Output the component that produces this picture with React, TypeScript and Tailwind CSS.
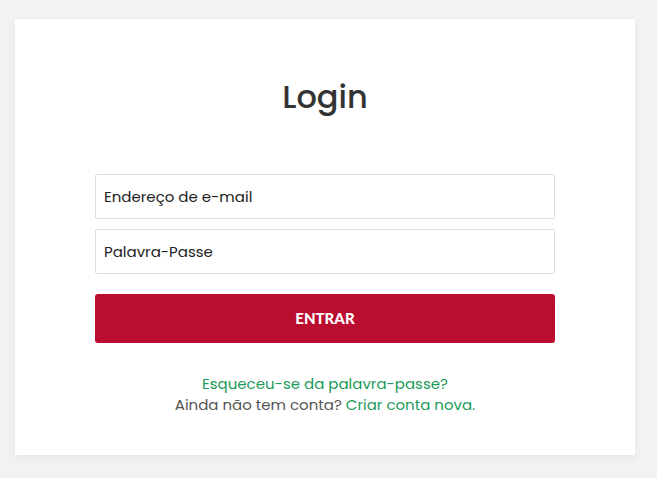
export default function App() {
  return (
    <div className="min-h-[478px] w-full bg-[#f2f2f2] pt-[19px] px-[15px] font-['Poppins','Noto_Sans',sans-serif]">
      <div className="w-[620px] h-[436px] bg-white shadow-[0_2px_10px_rgba(0,0,0,0.06)] px-[80px] pt-[56px]">
        <h1 className="text-center text-[32px] leading-[44px] font-medium text-[#333]">Login</h1>
        <form className="mt-[55px] flex flex-col">
          <input
            type="email"
            placeholder="Endereço de e-mail"
            className="h-[45px] w-full border border-[#ddd] rounded-[2px] px-[8px] text-[15px] placeholder:text-[#222] focus:outline-none"
          />
          <input
            type="password"
            placeholder="Palavra-Passe"
            className="mt-[10px] h-[45px] w-full border border-[#ddd] rounded-[2px] px-[8px] text-[15px] placeholder:text-[#222] focus:outline-none"
          />
          <button
            type="button"
            className="mt-[20px] h-[49px] w-full rounded-[3px] bg-[#ba0d30] text-white text-[15px] font-black font-['Lato',sans-serif]"
          >
            ENTRAR
          </button>
        </form>
        <div className="mt-[30px] text-center text-[15px] leading-[21px]">
          <a href="#" className="text-[#1b9a59]">Esqueceu-se da palavra-passe?</a>
          <p className="text-[#555]">
            Ainda não tem conta? <a href="#" className="text-[#1b9a59]">Criar conta nova.</a>
          </p>
        </div>
      </div>
    </div>
  );
}
